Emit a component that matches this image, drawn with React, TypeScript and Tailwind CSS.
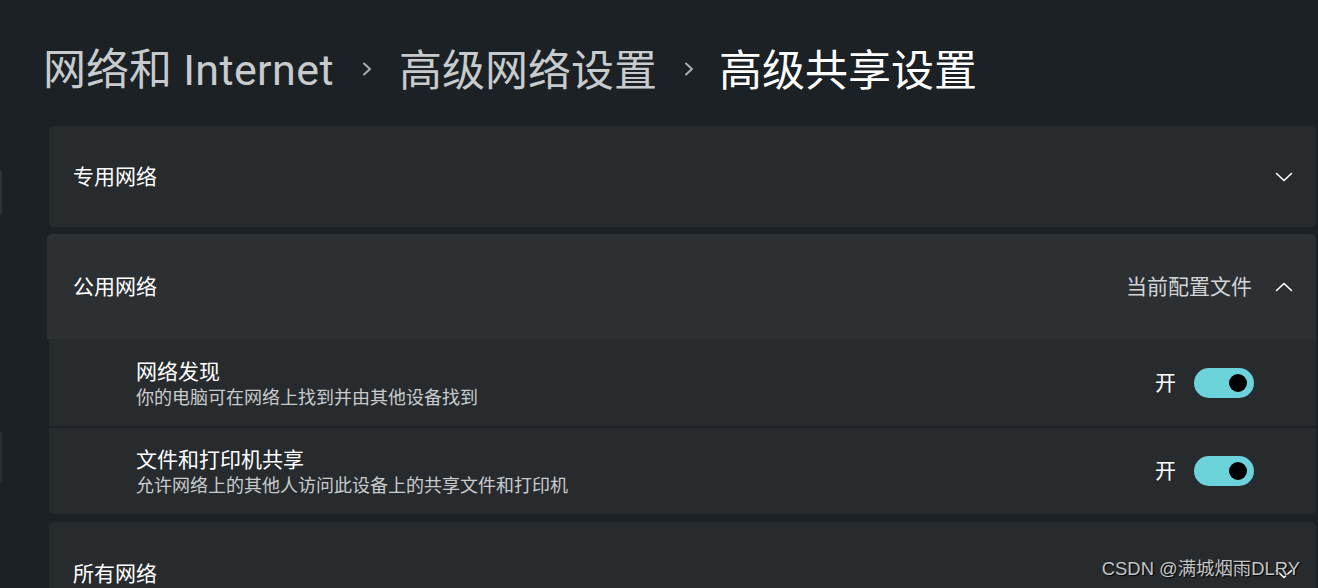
import React from 'react';

const Chevron = ({ up = false }: { up?: boolean }) => (
  <svg width="18" height="12" viewBox="0 0 18 12" className="shrink-0">
    <path
      d={up ? 'M1.5 9.5 L9 2.5 L16.5 9.5' : 'M1.5 2.5 L9 9.5 L16.5 2.5'}
      fill="none"
      stroke="#ffffff"
      strokeWidth="1.6"
      strokeLinecap="round"
      strokeLinejoin="round"
    />
  </svg>
);

const Crumb = ({ wide = false }: { wide?: boolean }) => (
  <svg
    width="12"
    height="14"
    viewBox="0 0 12 14"
    className={`shrink-0 ${wide ? 'ml-[27px] mr-[26px]' : 'ml-[26px] mr-[24px]'}`}
  >
    <path d="M3 1.5 L9 7 L3 12.5" fill="none" stroke="#a9adb0" strokeWidth="2" strokeLinecap="round" strokeLinejoin="round" />
  </svg>
);

const Toggle = () => (
  <div className="w-[60px] h-[30px] rounded-full bg-[#6dd3da] flex items-center justify-end pr-[7px]">
    <div className="w-[18px] h-[18px] rounded-full bg-black" />
  </div>
);

const SubRow = ({ title, desc, rounded }: { title: string; desc: string; rounded?: boolean }) => (
  <div className={`bg-[#272b2e] flex items-center pl-[87px] pr-[62px] ${rounded ? 'rounded-b-[5px] h-[86px]' : 'h-[87px]'}`}>
    <div className="flex-1 flex flex-col">
      <span className="text-[21px] leading-[28px] text-white">{title}</span>
      <span className="text-[18px] leading-[24px] text-[#c9cbcd]">{desc}</span>
    </div>
    <span className="text-[21px] text-white mr-[18px]">开</span>
    <Toggle />
  </div>
);

export default function App() {
  return (
    <div
      className="w-[1318px] h-[588px] overflow-hidden bg-[#1b2124] flex relative"
      style={{ fontFamily: '"Noto Sans", "Noto Sans CJK SC", sans-serif' }}
    >
      <aside className="w-[3px] shrink-0 flex flex-col">
        <div className="mt-[170px] h-[45px] w-[2px] rounded-r-[3px] bg-[#2d3236]" />
        <div className="mt-[217px] h-[51px] w-[2px] rounded-r-[3px] bg-[#2a2f33]" />
      </aside>

      <main className="flex-1 pl-[40px] pr-[2px] flex flex-col">
        <header className="h-[126px] shrink-0 flex items-center pt-[12px] text-[43px] leading-none">
          <span className="text-[#c8cbcd]">
            网络和{' '}
            <span className="tracking-[0.4px]" style={{ fontFamily: 'Roboto, "Noto Sans", sans-serif' }}>
              Internet
            </span>
          </span>
          <Crumb wide />
          <span className="text-[#c8cbcd]">高级网络设置</span>
          <Crumb />
          <span className="text-white">高级共享设置</span>
        </header>

        <div className="pl-[6px] flex flex-col">
          <div className="h-[101px] rounded-[5px] bg-[#272b2e] flex items-center pl-[24px] pr-[23px] mb-[7px]">
            <span className="flex-1 text-[21px] text-white">专用网络</span>
            <Chevron />
          </div>

          <div className="h-[105px] -ml-[2px] rounded-t-[5px] bg-[#2c3033] flex items-center pl-[26px] pr-[23px]">
            <span className="flex-1 text-[21px] text-white">公用网络</span>
            <span className="text-[21px] text-[#d2d4d6] mr-[23px]">当前配置文件</span>
            <Chevron up />
          </div>
          <SubRow title="网络发现" desc="你的电脑可在网络上找到并由其他设备找到" />
          <div className="h-[2px] bg-[#1e2226]" />
          <SubRow title="文件和打印机共享" desc="允许网络上的其他人访问此设备上的共享文件和打印机" rounded />

          <div className="h-[101px] mt-[8px] rounded-[5px] bg-[#272b2e] flex items-center pl-[24px] pr-[23px] pt-[2px]">
            <span className="flex-1 text-[21px] text-white">所有网络</span>
            <Chevron />
          </div>
        </div>
      </main>

      <div
        className="absolute right-[18px] bottom-[8px] text-[18.4px] leading-[22px] text-[#c4c6c8]"
        style={{ textShadow: '1px 1px 1px #000', fontFamily: '"Liberation Sans", "Noto Sans CJK SC", sans-serif' }}
      >
        CSDN @满城烟雨DLRY
      </div>
    </div>
  );
}
